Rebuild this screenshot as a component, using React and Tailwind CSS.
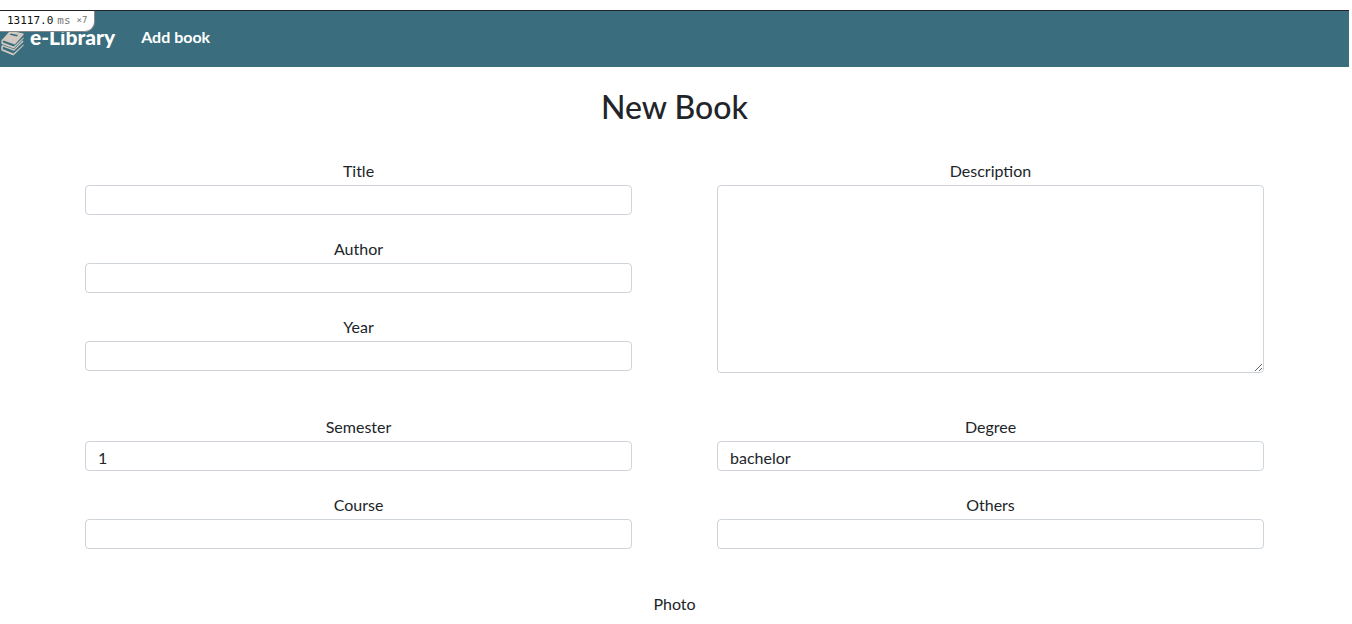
import React from "react";

const control =
  "block h-[30px] w-full appearance-none rounded border border-[#ced4da] bg-white px-3 text-base text-[#212529] outline-none focus:border-[#3a6e7e]";

function Field({ id, label, children }) {
  return (
    <div>
      <label htmlFor={id} className="block pb-1 text-center text-base leading-5">
        {label}
      </label>
      {children || <input id={id} name={id} type="text" className={control} />}
    </div>
  );
}

function BooksLogo() {
  return (
    <svg viewBox="0 0 24 26" className="h-[26px] w-6 shrink-0" aria-hidden="true">
      <g fill="#d2c9c1">
        <path d="M10 .8 L23.6 3.4 L15 13.4 L2.6 9.2 Z" />
        <path d="M2.8 8.8 Q.8 10.4 1.6 14 L13.8 18.6 L23.6 8.6 V7.2 L13.8 16.6 L3 12.6 Q2.4 11 3.4 10.6 L14.8 14.6 L23.8 4.6 L23 3.6 L14.4 12.8 Z" />
        <path d="M2.2 15 Q.6 16.6 1.4 20.4 L13.4 25.6 L23.6 15.6 V14.2 L13.4 23.6 L3 19.2 Q2.2 17.4 3.2 16.8 L14 20.8 L23.6 11.6 L22.6 10.4 L14 19.2 Z" />
      </g>
      <path d="M11 3.6 L18 5 L16.8 6.4 L9.6 4.8 Z" fill="#3a6e7e" />
    </svg>
  );
}

export default function App() {
  return (
    <div className="pr-[3px] pt-2.5 font-['Lato',sans-serif] text-[#212529]">
      <header className="relative border-t border-[#212529]">
        <nav className="flex h-14 items-center bg-[#3a6e7e] pb-1 text-white">
          <a href="#home" className="flex items-center gap-1.5">
            <span className="pt-3">
              <BooksLogo />
            </span>
            <span className="text-[21px] font-black leading-6">e-Library</span>
          </a>
          <a href="#add" className="ml-[26px] text-base font-bold leading-6">
            Add book
          </a>
        </nav>
        <div className="absolute left-0 top-0 flex h-[21px] items-center gap-1 rounded-br-[10px] border-b border-r border-[#888] bg-white px-[7px] font-['DejaVu_Sans_Mono',monospace] text-[11px] text-[#111]">
          <span>13117.0</span>
          <span className="text-[#777]">ms</span>
          <span className="pl-0.5 text-[9px] text-[#777]">×7</span>
        </div>
      </header>

      <main>
        <h1 className="pt-5 text-center text-[32px] font-medium leading-10">New Book</h1>
        <form className="px-[85px] pt-[34px]">
          <div className="grid grid-cols-2 gap-x-[85px]">
            <div className="flex flex-col gap-6">
              <Field id="title" label="Title" />
              <Field id="author" label="Author" />
              <Field id="year" label="Year" />
            </div>
            <Field id="description" label="Description">
              <textarea
                id="description"
                name="description"
                className="block h-[188px] w-full resize rounded border border-[#ced4da] bg-white px-3 py-1.5 text-base outline-none focus:border-[#3a6e7e]"
              />
            </Field>
          </div>

          <div className="mt-11 grid grid-cols-2 gap-x-[85px] gap-y-6">
            <Field id="semester" label="Semester">
              <select id="semester" name="semester" className={control + " pt-1"} defaultValue="1">
                <option>1</option>
                <option>2</option>
              </select>
            </Field>
            <Field id="degree" label="Degree">
              <select id="degree" name="degree" className={control + " pt-1"} defaultValue="bachelor">
                <option>bachelor</option>
                <option>master</option>
              </select>
            </Field>
            <Field id="course" label="Course" />
            <Field id="others" label="Others" />
          </div>

          <h2 className="mt-[43px] text-center text-base leading-6">Photo</h2>
        </form>
      </main>
    </div>
  );
}
